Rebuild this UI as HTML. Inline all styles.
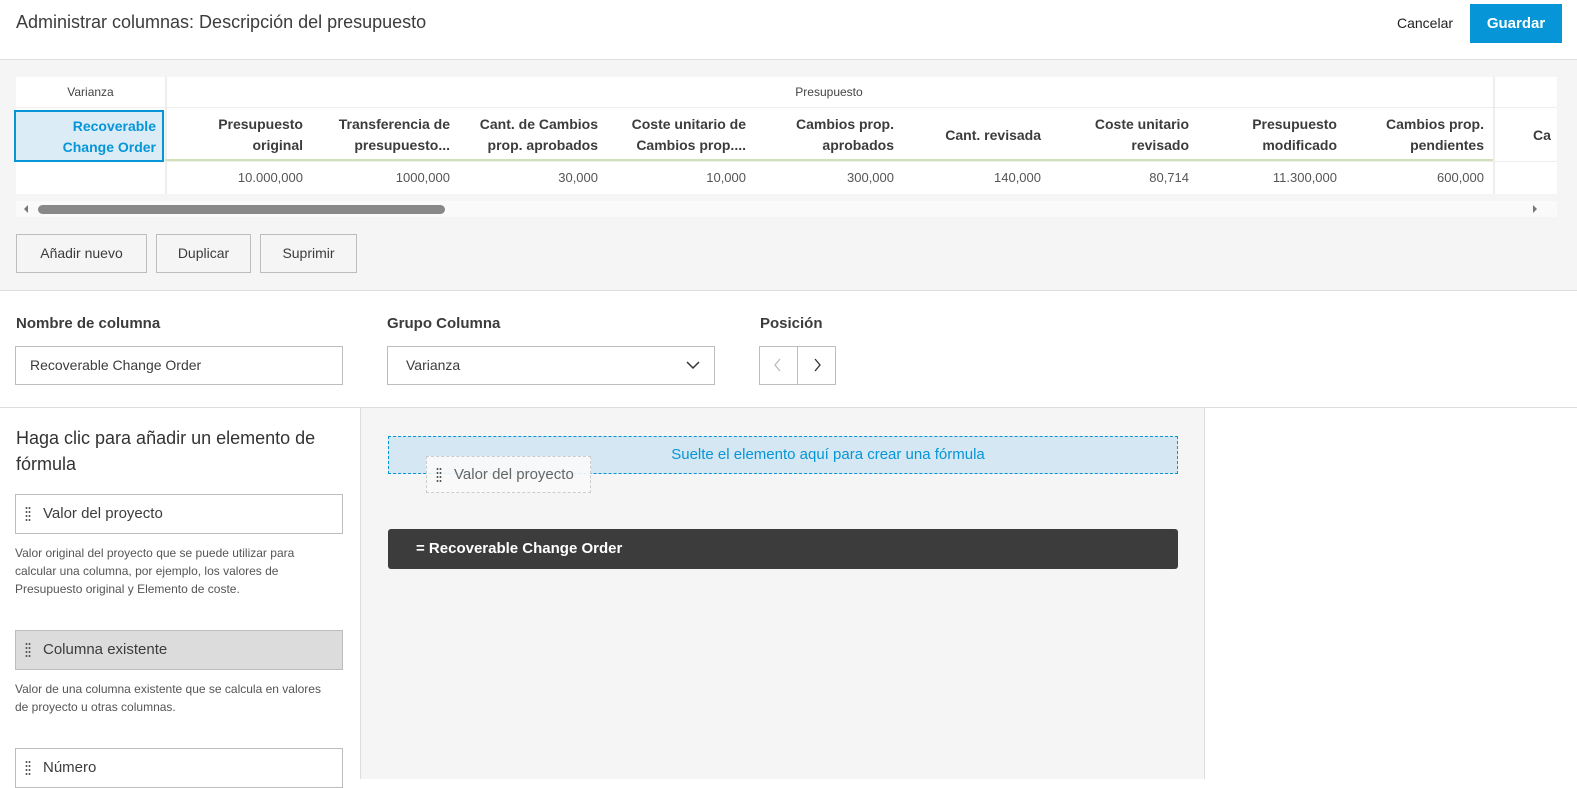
<!DOCTYPE html><html><head><meta charset="utf-8"><style>
*{box-sizing:border-box;margin:0;padding:0}
body{width:1577px;height:779px;overflow:hidden;background:#fff;font-family:"Liberation Sans",sans-serif;color:#3c3c3c;position:relative}
.a{position:absolute}
.th{position:absolute;top:108px;height:52px;font-size:14px;font-weight:bold;text-align:right;line-height:21px;padding-top:6px;color:#3c3c3c;white-space:nowrap}
.td{position:absolute;top:162px;height:31px;line-height:31px;font-size:13px;text-align:right;color:#555}
.btn{position:absolute;top:234px;height:39px;border:1px solid #bdbdbd;background:#f5f5f5;font-size:14px;line-height:37px;text-align:center;color:#3c3c3c}
.lbl{position:absolute;top:315px;font-size:15px;font-weight:bold;color:#3c3c3c}
.inp{position:absolute;top:346px;height:39px;border:1px solid #bdbdbd;background:#fff;font-size:14px;line-height:37px;padding-left:14px}
.item{position:absolute;left:15px;width:328px;height:40px;border:1px solid #bdbdbd;background:#fff;font-size:15px;line-height:38px;padding-left:27px}
.dots{position:absolute;left:9px;top:11px;width:6px;height:16px;background-image:radial-gradient(circle,#555 0.9px,transparent 1.1px);background-size:3px 4px}
.desc{position:absolute;left:15px;font-size:12px;line-height:18px;color:#555;width:322px}
</style></head><body>
<div class="a" style="left:16px;top:8px;font-size:18px;line-height:28px;color:#3c3c3c">Administrar columnas: Descripción del presupuesto</div>
<div class="a" style="left:1397px;top:14px;font-size:14px;line-height:18px;color:#222">Cancelar</div>
<div class="a" style="left:1470px;top:4px;width:92px;height:39px;background:#0696d7;color:#fff;font-weight:bold;font-size:15px;line-height:39px;text-align:center">Guardar</div>
<div class="a" style="left:0;top:59px;width:1577px;height:232px;background:#f5f5f5;border-top:1px solid #ddd;border-bottom:1px solid #ddd"></div>
<div class="a" style="left:16px;top:77px;width:1541px;height:117px;background:#fff"></div>
<div class="a" style="left:16px;top:77px;width:149px;height:31px;font-size:12px;line-height:31px;text-align:center;color:#444">Varianza</div>
<div class="a" style="left:165px;top:77px;width:1328px;height:31px;font-size:12px;line-height:31px;text-align:center;color:#444">Presupuesto</div>
<div class="a" style="left:165px;top:77px;width:2px;height:117px;background:#eee"></div>
<div class="a" style="left:1493px;top:77px;width:2px;height:117px;background:#eee"></div>
<div class="a" style="left:16px;top:107px;width:1541px;height:1px;background:#eee"></div>
<div class="a" style="left:165px;top:159px;width:1328px;height:2px;background:#cfe3b6"></div>
<div class="a" style="left:16px;top:161px;width:1541px;height:1px;background:#eee"></div>
<div class="a" style="left:14px;top:110px;width:150px;height:52px;border:2px solid #0696d7;background:#dcecf7;color:#0696d7;font-size:14px;font-weight:bold;text-align:right;line-height:21px;padding:4px 6px 0 0">Recoverable<br>Change Order</div>
<div class="th" style="right:1274px">Presupuesto<br>original</div>
<div class="th" style="right:1127px">Transferencia de<br>presupuesto...</div>
<div class="th" style="right:979px">Cant. de Cambios<br>prop. aprobados</div>
<div class="th" style="right:831px">Coste unitario de<br>Cambios prop....</div>
<div class="th" style="right:683px">Cambios prop.<br>aprobados</div>
<div class="th" style="right:536px;padding-top:17px">Cant. revisada</div>
<div class="th" style="right:388px">Coste unitario<br>revisado</div>
<div class="th" style="right:240px">Presupuesto<br>modificado</div>
<div class="th" style="right:93px">Cambios prop.<br>pendientes</div>
<div class="th" style="left:1533px;padding-top:17px;width:24px;overflow:hidden;text-align:left">Ca</div>
<div class="td" style="right:1274px">10.000,000</div>
<div class="td" style="right:1127px">1000,000</div>
<div class="td" style="right:979px">30,000</div>
<div class="td" style="right:831px">10,000</div>
<div class="td" style="right:683px">300,000</div>
<div class="td" style="right:536px">140,000</div>
<div class="td" style="right:388px">80,714</div>
<div class="td" style="right:240px">11.300,000</div>
<div class="td" style="right:93px">600,000</div>
<div class="a" style="left:16px;top:201px;width:1541px;height:16px;background:#fafafa"></div>
<div class="a" style="left:24px;top:205px;width:0;height:0;border-top:4px solid transparent;border-bottom:4px solid transparent;border-right:4px solid #777"></div>
<div class="a" style="left:1533px;top:205px;width:0;height:0;border-top:4px solid transparent;border-bottom:4px solid transparent;border-left:4px solid #777"></div>
<div class="a" style="left:38px;top:205px;width:407px;height:9px;border-radius:5px;background:#888"></div>
<div class="btn" style="left:16px;width:131px">Añadir nuevo</div>
<div class="btn" style="left:156px;width:95px">Duplicar</div>
<div class="btn" style="left:260px;width:97px">Suprimir</div>
<div class="lbl" style="left:16px">Nombre de columna</div>
<div class="lbl" style="left:387px">Grupo Columna</div>
<div class="lbl" style="left:760px">Posición</div>
<div class="inp" style="left:15px;width:328px">Recoverable Change Order</div>
<div class="inp" style="left:387px;width:328px;padding-left:18px">Varianza<svg class="a" style="right:14px;top:14px" width="14" height="9" viewBox="0 0 14 9"><path d="M1 1l6 6 6-6" fill="none" stroke="#333" stroke-width="1.5"/></svg></div>
<div class="a" style="left:759px;top:346px;width:77px;height:39px;border:1px solid #bdbdbd;background:#fff"></div>
<div class="a" style="left:797px;top:346px;width:1px;height:39px;background:#bdbdbd"></div>
<svg class="a" style="left:774px;top:358px" width="8" height="14"><path d="M6 1L1 7l5 6" fill="none" stroke="#bbb" stroke-width="1.3"/></svg>
<svg class="a" style="left:813px;top:358px" width="8" height="14"><path d="M2 1l5 6-5 6" fill="none" stroke="#333" stroke-width="1.3"/></svg>
<div class="a" style="left:0;top:407px;width:1577px;height:1px;background:#ddd"></div>
<div class="a" style="left:360px;top:408px;width:845px;height:371px;background:#f5f5f5;border-left:1px solid #ddd;border-right:1px solid #ddd"></div>
<div class="a" style="left:16px;top:425px;font-size:18px;line-height:26px;width:330px;color:#333">Haga clic para añadir un elemento de fórmula</div>
<div class="item" style="top:494px"><span class="dots"></span>Valor del proyecto</div>
<div class="desc" style="top:544px">Valor original del proyecto que se puede utilizar para calcular una columna, por ejemplo, los valores de Presupuesto original y Elemento de coste.</div>
<div class="item" style="top:630px;background:#dcdcdc"><span class="dots"></span>Columna existente</div>
<div class="desc" style="top:680px">Valor de una columna existente que se calcula en valores de proyecto u otras columnas.</div>
<div class="item" style="top:748px"><span class="dots"></span>Número</div>
<div class="a" style="left:388px;top:436px;width:790px;height:38px;border:1px dashed #0696d7;background:#d4e7f3;color:#0696d7;font-size:15px;line-height:36px;text-align:center;padding-left:90px">Suelte el elemento aquí para crear una fórmula</div>
<div class="a" style="left:426px;top:456px;width:165px;height:37px;border:1px dashed #ccc;background:rgba(250,250,250,.9);color:#666;font-size:15px;line-height:35px;padding-left:27px"><span class="dots" style="top:10px"></span>Valor del proyecto</div>
<div class="a" style="left:388px;top:529px;width:790px;height:40px;background:#3c3c3c;border-radius:3px;color:#fff;font-weight:bold;font-size:15px;line-height:40px;padding-left:28px">= Recoverable Change Order</div>
</body></html>
